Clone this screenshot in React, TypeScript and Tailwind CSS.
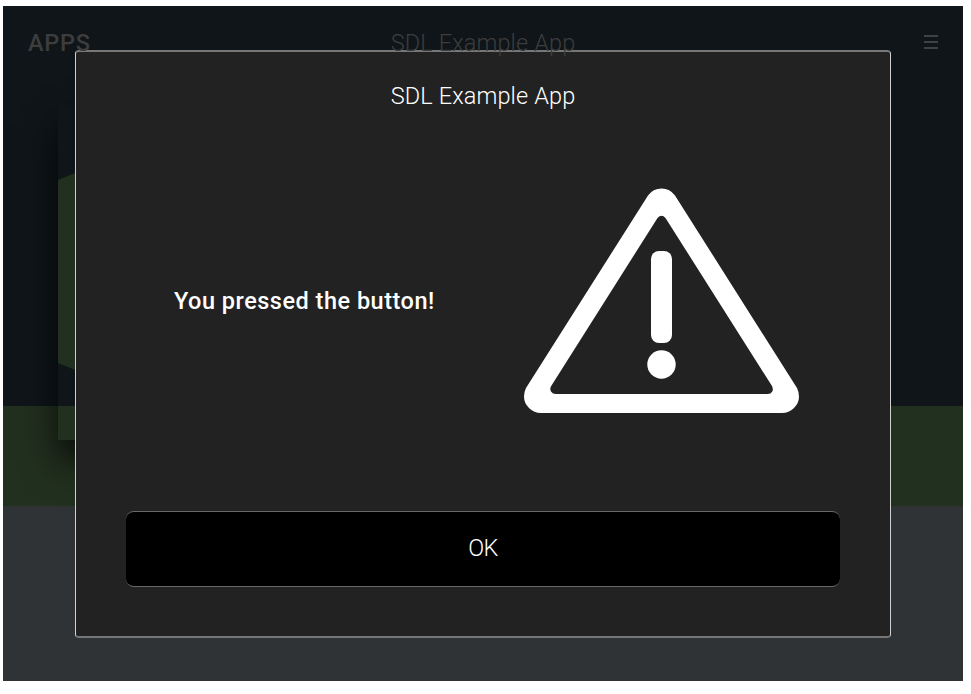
import React from "react";

function AppBackground() {
  return (
    <div className="flex h-[675px] w-[960px] flex-col overflow-hidden bg-[#0f1519]">
      <header className="relative z-10 flex h-[73px] items-center justify-between pl-[25px] pr-[25px] text-[#3d3d3d]">
        <span className="w-[120px] text-[23.5px] font-medium leading-7 tracking-[0.7px]">APPS</span>
        <h1 className="whitespace-nowrap text-[23.5px] font-light leading-7 tracking-[0.13px]">SDL Example App</h1>
        <div className="mb-px flex w-[120px] flex-col items-end gap-1">
          <i className="h-0.5 w-3.5 bg-[#414141]" />
          <i className="h-0.5 w-3.5 bg-[#414141]" />
          <i className="h-0.5 w-3.5 bg-[#414141]" />
        </div>
      </header>
      <main className="relative h-[327px] shrink-0 pl-[55px] pt-[26px]">
        <div className="absolute inset-x-0 top-[327px] h-[100px] bg-[#22301f]" />
        <div className="relative h-[335px] w-[335px] bg-[#0f1519] shadow-[0_20px_34px_rgba(0,0,0,0.75)]">
          <svg className="block" width="335" height="335" viewBox="0 0 335 335">
            <path d="M0 75L168 6L335 75V258L168 327L0 258Z" fill="#22301f" />
            <path d="M0 301H335V335H0Z" fill="#22301f" />
          </svg>
        </div>
      </main>
      <footer className="mt-[100px] h-[175px] shrink-0 bg-[#2f3336]" />
    </div>
  );
}

function WarningIcon() {
  return (
    <svg className="block" width="276" height="226" viewBox="523 188 276 226" fill="#fff">
      <path
        fillRule="evenodd"
        d="M648 195.500Q653 188.500 661.500 188.500T675 195.500L797 388Q799 392 799 396.500Q799 403 794 408Q789 413 782 413H541Q534 413 529 408Q524 403 524 396.500Q524 392 526 388ZM657.500 218L551.200 386Q549.500 389 551 391.500Q552.500 394 556 394H767.500Q771 394 772.300 391.500Q773.500 389 772 386L665.500 218Q661.500 213.500 657.500 218Z"
      />
      <rect x="651" y="251" width="21" height="92" rx="8" />
      <circle cx="661.500" cy="364.500" r="14.200" />
    </svg>
  );
}

function AlertDialog() {
  return (
    <section className="absolute left-[75px] top-[50px] flex h-[588px] w-[816px] flex-col rounded-[4px] border-x border-y-2 border-x-[#d0d0d0] border-y-[#777777] bg-[#222222] text-white">
      <h2 className="mt-[30px] whitespace-nowrap text-center text-[23.5px] font-light leading-7 tracking-[0.13px]">SDL Example App</h2>
      <div className="mt-[78px] flex h-[226px] items-center">
        <p className="ml-[98px] w-[349px] whitespace-nowrap text-[23.5px] font-medium leading-7 tracking-[0.5px]">You pressed the button!</p>
        <WarningIcon />
      </div>
      <button className="mx-[50px] mt-[97px] h-[76px] rounded-lg border-y border-[#686868] bg-black pb-0.5 text-[23.5px] font-light leading-7 tracking-[-0.7px]">OK</button>
    </section>
  );
}

export default function App() {
  return (
    <div className="h-[694px] w-[971px] overflow-hidden bg-white pl-[3px] pt-[6px] font-['Roboto',sans-serif]">
      <AppBackground />
      <AlertDialog />
    </div>
  );
}
